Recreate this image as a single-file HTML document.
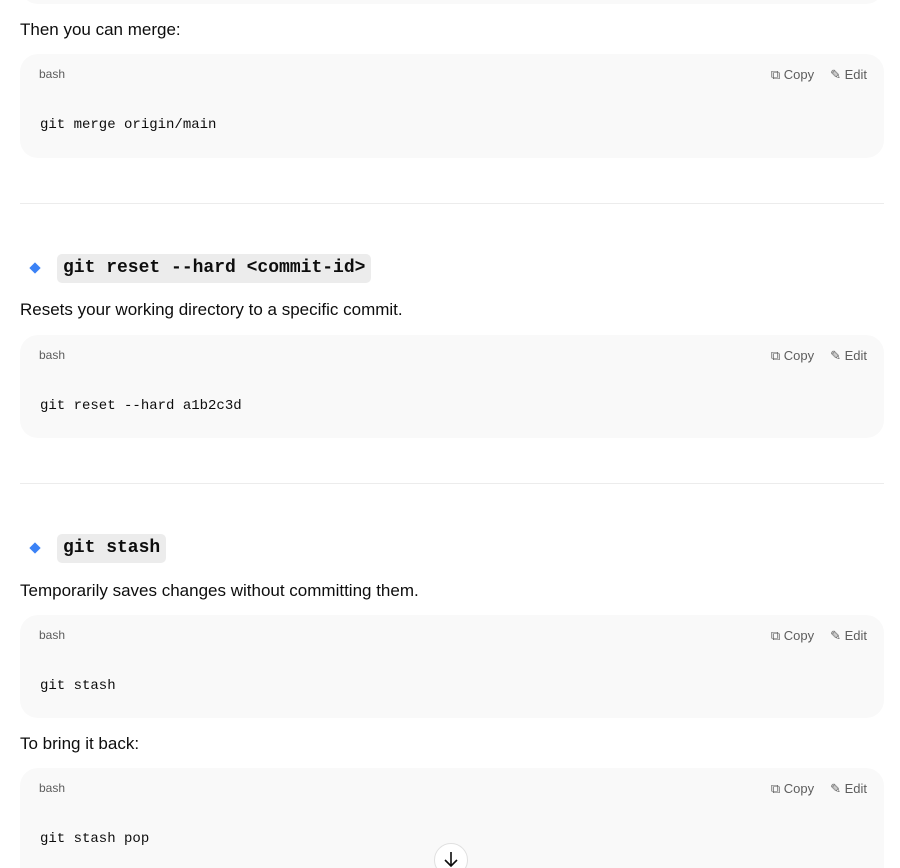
<!DOCTYPE html>
<html style="height:868px;overflow:hidden"><head><style>
body{margin:0;width:900px;height:868px;overflow:hidden;background:#fff;font-family:"Liberation Sans",sans-serif;color:#0d0d0d;position:relative}
.a{position:absolute}
.p{left:20px;font-size:17px;line-height:24px}
.cb{left:20px;width:864px;background:#f9f9f9;border-radius:18px}
.lang{position:absolute;left:19px;top:13px;font-size:12px;color:#5d5d5d}
.act{position:absolute;right:17px;top:13px;font-size:13px;color:#5d5d5d}
.act span{margin-left:16px}
.code{position:absolute;left:20px;top:63px;font-family:"Liberation Mono",monospace;font-size:14px;color:#0d0d0d}
.hr{left:20px;width:864px;height:1px;background:#ececec}
.dia{left:31px;width:8px;height:8px;background:#3b82f6;transform:rotate(45deg)}
.pill{left:57px;height:29px;background:#ececec;border-radius:5px;font-family:"Liberation Mono",monospace;font-size:18px;font-weight:bold;line-height:29px;padding:0 6px}
</style></head><body>
<div class="a cb" style="top:-40px;height:44px"></div>
<div class="a p" style="top:18px">Then you can merge:</div>
<div class="a cb" style="top:54px;height:104px"><div class="lang">bash</div><div class="act"><span>⧉ Copy</span><span>✎ Edit</span></div><div class="code">git merge origin/main</div></div>
<div class="a hr" style="top:203px"></div>
<div class="a dia" style="top:264px"></div>
<div class="a pill" style="top:254px">git reset --hard &lt;commit-id&gt;</div>
<div class="a p" style="top:298px">Resets your working directory to a specific commit.</div>
<div class="a cb" style="top:335px;height:103px"><div class="lang">bash</div><div class="act"><span>⧉ Copy</span><span>✎ Edit</span></div><div class="code">git reset --hard a1b2c3d</div></div>
<div class="a hr" style="top:483px"></div>
<div class="a dia" style="top:544px"></div>
<div class="a pill" style="top:534px">git stash</div>
<div class="a p" style="top:579px">Temporarily saves changes without committing them.</div>
<div class="a cb" style="top:615px;height:103px"><div class="lang">bash</div><div class="act"><span>⧉ Copy</span><span>✎ Edit</span></div><div class="code">git stash</div></div>
<div class="a p" style="top:732px">To bring it back:</div>
<div class="a cb" style="top:768px;height:100px;border-radius:18px 18px 0 0"><div class="lang">bash</div><div class="act"><span>⧉ Copy</span><span>✎ Edit</span></div><div class="code">git stash pop</div></div>
<div class="a" style="left:434px;top:843px;width:34px;height:25px;overflow:hidden"><div style="width:34px;height:34px;box-sizing:border-box;border-radius:50%;background:#fff;border:1px solid #e0e0e0">
<svg width="32" height="32" viewBox="0 0 32 32"><path d="M16 8v14M10 16l6 6 6-6" stroke="#0d0d0d" stroke-width="1.6" fill="none"/></svg></div></div>
</body></html>
